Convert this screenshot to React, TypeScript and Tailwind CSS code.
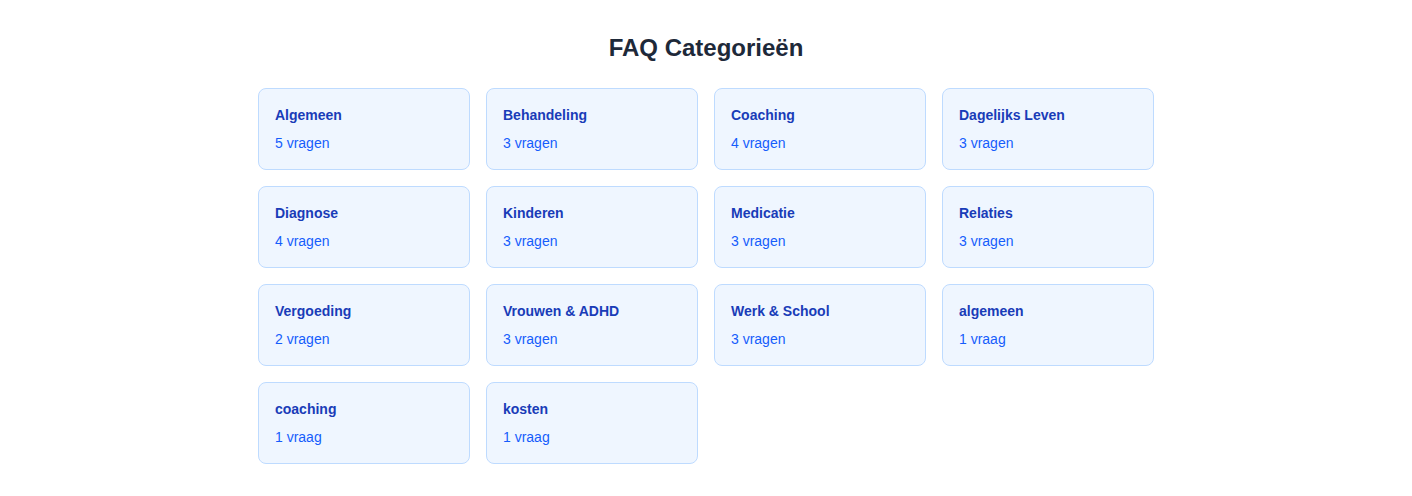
const categories = [
  { name: "Algemeen", count: "5 vragen" },
  { name: "Behandeling", count: "3 vragen" },
  { name: "Coaching", count: "4 vragen" },
  { name: "Dagelijks Leven", count: "3 vragen" },
  { name: "Diagnose", count: "4 vragen" },
  { name: "Kinderen", count: "3 vragen" },
  { name: "Medicatie", count: "3 vragen" },
  { name: "Relaties", count: "3 vragen" },
  { name: "Vergoeding", count: "2 vragen" },
  { name: "Vrouwen & ADHD", count: "3 vragen" },
  { name: "Werk & School", count: "3 vragen" },
  { name: "algemeen", count: "1 vraag" },
  { name: "coaching", count: "1 vraag" },
  { name: "kosten", count: "1 vraag" },
];

export default function App() {
  return (
    <div className="min-h-screen bg-white py-8 font-['Liberation_Sans',Arial,sans-serif]">
      <div className="max-w-4xl mx-auto">
        {/* Titel */}
        <h2 className="text-2xl font-bold text-gray-800 text-center mb-6">
          FAQ Categorieën
        </h2>

        {/* Categorie kaarten */}
        <div className="grid grid-cols-4 gap-4">
          {categories.map((c) => (
            <div
              key={c.name}
              className="p-4 bg-blue-50 border border-blue-200 rounded-lg"
            >
              <h3 className="text-sm font-bold text-blue-800 mb-2">{c.name}</h3>
              <p className="text-sm text-blue-600">{c.count}</p>
            </div>
          ))}
        </div>
      </div>
    </div>
  );
}
